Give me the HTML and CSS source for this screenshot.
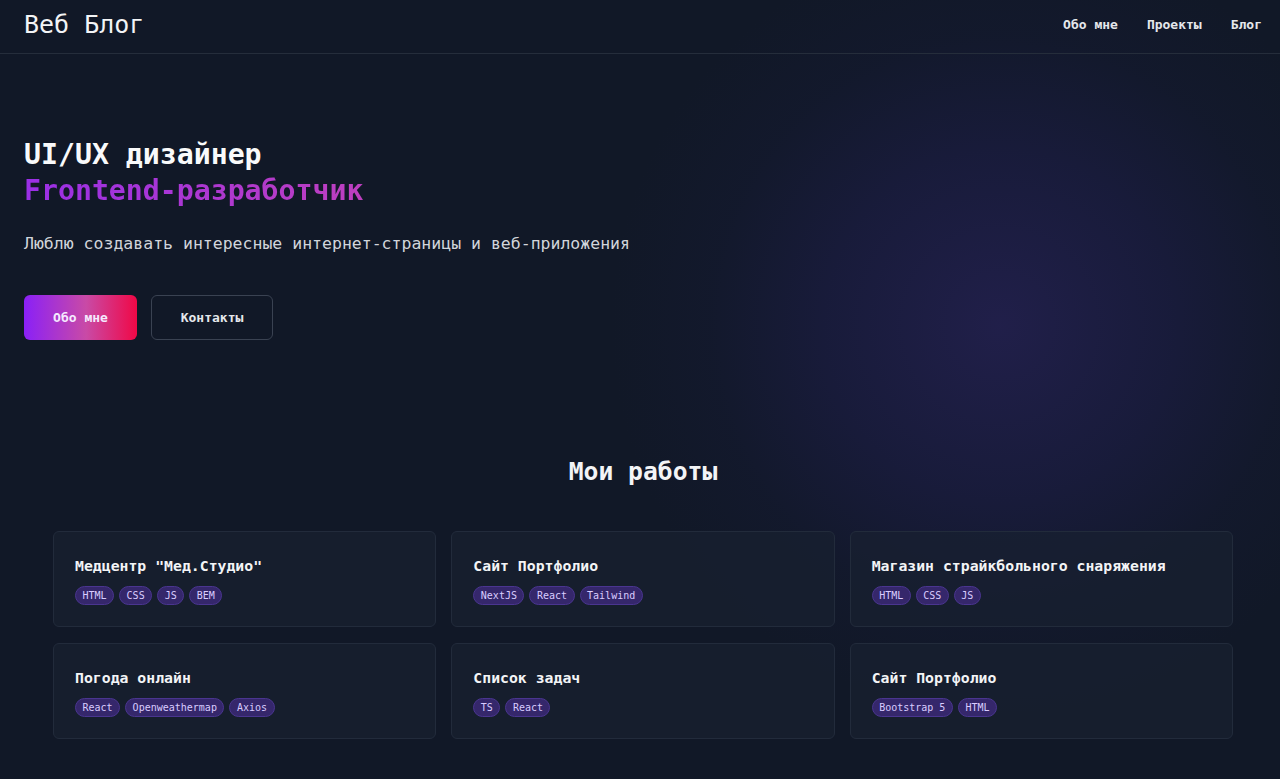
FILE: index.html
```html
<!DOCTYPE html>
<html lang="ru">
<head>
<meta charset="utf-8">
<title>Веб Блог</title>
<link rel="stylesheet" href="styles.css">
</head>
<body>
<header class="site-header">
  <div class="logo">Веб Блог</div>
  <nav class="nav">
    <a href="#">Обо мне</a>
    <a href="#">Проекты</a>
    <a href="#">Блог</a>
  </nav>
</header>
<main class="page">
  <section class="hero">
    <h1 class="hero-title">UI/UX дизайнер<br><span class="accent">Frontend-разработчик</span></h1>
    <p class="hero-text">Люблю создавать интересные интернет-страницы и веб-приложения</p>
    <div class="hero-actions">
      <a class="btn btn-primary" href="#">Обо мне</a>
      <a class="btn btn-outline" href="#">Контакты</a>
    </div>
  </section>
  <section class="works">
    <h2 class="works-title">Мои работы</h2>
    <div class="grid">
      <div class="card">
        <h3 class="card-title">Медцентр "Мед.Студио"</h3>
        <div class="tags"><span class="tag">HTML</span><span class="tag">CSS</span><span class="tag">JS</span><span class="tag">BEM</span></div>
      </div>
      <div class="card">
        <h3 class="card-title">Сайт Портфолио</h3>
        <div class="tags"><span class="tag">NextJS</span><span class="tag">React</span><span class="tag">Tailwind</span></div>
      </div>
      <div class="card">
        <h3 class="card-title">Магазин страйкбольного снаряжения</h3>
        <div class="tags"><span class="tag">HTML</span><span class="tag">CSS</span><span class="tag">JS</span></div>
      </div>
      <div class="card">
        <h3 class="card-title">Погода онлайн</h3>
        <div class="tags"><span class="tag">React</span><span class="tag">Openweathermap</span><span class="tag">Axios</span></div>
      </div>
      <div class="card">
        <h3 class="card-title">Список задач</h3>
        <div class="tags"><span class="tag">TS</span><span class="tag">React</span></div>
      </div>
      <div class="card">
        <h3 class="card-title">Сайт Портфолио</h3>
        <div class="tags"><span class="tag">Bootstrap 5</span><span class="tag">HTML</span></div>
      </div>
    </div>
  </section>
</main>
</body>
</html>
```

FILE: styles.css
```css
* { box-sizing: border-box; }

html, body {
  margin: 0;
  padding: 0;
}

body {
  min-height: 779px;
  background-color: #111827;
  background-image: radial-gradient(circle at 1000px 325px, rgba(48, 38, 108, 0.5) 0px, rgba(40, 34, 100, 0.32) 170px, rgba(30, 30, 80, 0.12) 290px, rgba(17, 24, 39, 0) 390px);
  background-repeat: no-repeat;
  color: #e5e7eb;
  font-family: "DejaVu Sans Mono", "Liberation Mono", monospace;
}

a { text-decoration: none; color: inherit; }

.site-header {
  display: flex;
  align-items: center;
  justify-content: space-between;
  height: 54px;
  padding: 0 18px 0 24px;
  border-bottom: 1px solid #252d3b;
}

.logo {
  font-size: 25px;
  color: #f3f4f6;
  line-height: 30px;
  padding-bottom: 4px;
}

.nav {
  display: flex;
  gap: 29px;
  font-size: 13px;
  font-weight: 600;
  padding-bottom: 4px;
}

.nav a { color: #e5e7eb; }

.hero {
  padding: 83px 24px 0;
}

.hero-title {
  margin: 0;
  font-size: 28.2px;
  line-height: 36px;
  font-weight: 700;
  color: #f9fafb;
}

.accent {
  background: linear-gradient(90deg, #9a2fe6, #bd3fbf);
  -webkit-background-clip: text;
  background-clip: text;
  color: transparent;
}

.hero-text {
  margin: 23px 0 0;
  font-size: 16.5px;
  line-height: 24px;
  color: #d1d5db;
}

.hero-actions {
  display: flex;
  gap: 14px;
  margin-top: 39px;
}

.btn {
  display: flex;
  align-items: center;
  justify-content: center;
  height: 45px;
  padding: 0 28px;
  border-radius: 6px;
  font-size: 13px;
  font-weight: 700;
}

.btn-primary {
  width: 113px;
  background: linear-gradient(90deg, #8a20f7, #c94aa6 55%, #f00846);
  color: #f5e9ff;
}

.btn-outline {
  width: 122px;
  border: 1px solid #3a4252;
  color: #e5e7eb;
}

.works {
  padding: 116px 47px 40px 53px;
}

.works-title {
  margin: 0;
  text-align: center;
  font-size: 24.7px;
  line-height: 32px;
  font-weight: 700;
  color: #f3f4f6;
}

.grid {
  margin-top: 43px;
  display: grid;
  grid-template-columns: repeat(3, 1fr);
  gap: 16px 15px;
}

.card {
  height: 96px;
  padding: 24px 21px 0;
  background: rgba(24, 33, 49, 0.7);
  border: 1px solid #222b3b;
  border-radius: 6px;
}

.card-title {
  margin: 0;
  font-size: 14.8px;
  line-height: 20px;
  font-weight: 700;
  color: #f3f4f6;
}

.tags {
  display: flex;
  gap: 5px;
  margin-top: 10px;
}

.tag {
  display: inline-flex;
  align-items: center;
  height: 19px;
  padding: 0 6.5px;
  border-radius: 999px;
  background: #35276b;
  border: 1px solid #4a3590;
  color: #d9ccff;
  font-size: 10px;
}
```
